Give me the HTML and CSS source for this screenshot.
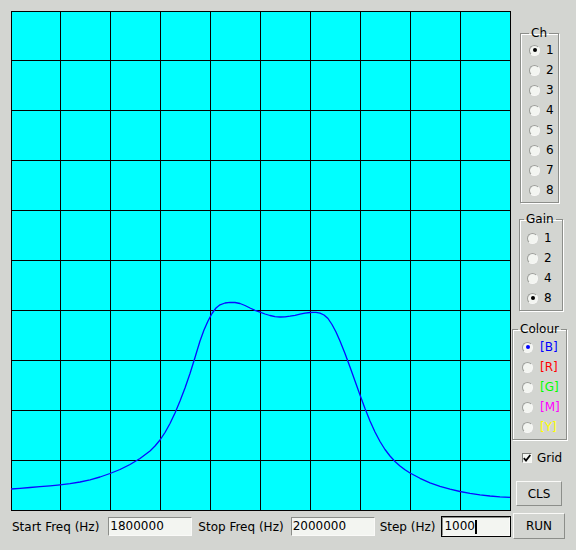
FILE: index.html
```html
<!DOCTYPE html>
<html lang="en">
<head>
  <meta charset="UTF-8">
  <title>Sweep</title>
  <link rel="stylesheet" href="styles.css">
</head>
<body>
  <div class="app">
    <div class="plot">
      <svg class="scope" width="500" height="500" viewBox="11 11 500 500">
        <rect x="11" y="11" width="500" height="500" fill="#00ffff"/>
        <g class="grid">
          <line x1="11.5" y1="11" x2="11.5" y2="511"/>
          <line x1="60.5" y1="11" x2="60.5" y2="511"/>
          <line x1="110.5" y1="11" x2="110.5" y2="511"/>
          <line x1="160.5" y1="11" x2="160.5" y2="511"/>
          <line x1="210.5" y1="11" x2="210.5" y2="511"/>
          <line x1="260.5" y1="11" x2="260.5" y2="511"/>
          <line x1="310.5" y1="11" x2="310.5" y2="511"/>
          <line x1="360.5" y1="11" x2="360.5" y2="511"/>
          <line x1="410.5" y1="11" x2="410.5" y2="511"/>
          <line x1="460.5" y1="11" x2="460.5" y2="511"/>
          <line x1="510.5" y1="11" x2="510.5" y2="511"/>
          <line x1="11" y1="11.5" x2="511" y2="11.5"/>
          <line x1="11" y1="60.5" x2="511" y2="60.5"/>
          <line x1="11" y1="110.5" x2="511" y2="110.5"/>
          <line x1="11" y1="160.5" x2="511" y2="160.5"/>
          <line x1="11" y1="210.5" x2="511" y2="210.5"/>
          <line x1="11" y1="260.5" x2="511" y2="260.5"/>
          <line x1="11" y1="310.5" x2="511" y2="310.5"/>
          <line x1="11" y1="360.5" x2="511" y2="360.5"/>
          <line x1="11" y1="410.5" x2="511" y2="410.5"/>
          <line x1="11" y1="460.5" x2="511" y2="460.5"/>
          <line x1="11" y1="510.5" x2="511" y2="510.5"/>
        </g>
        <polyline class="trace" points="11,489 20,488.3 30,487.5 40,486.7 50,485.8 60,484.8 70,483.6 80,482 90,479.8 100,477 110,473.5 120,469.5 130,464.5 140,458.5 150,451 155,446 160,440 165,432.5 170,423.5 175,413 180,401 185,388 190,373.5 195,357.5 200,341 204,330 208,321 212,313.5 216,308 220,304.8 225,303 230,302.3 235,302.5 240,303.5 245,305.5 250,308 255,310.3 260,312.2 265,314 270,315.5 275,316.6 280,317 285,316.8 290,316.2 295,315.3 300,314.2 305,313.2 310,312.5 313,312.3 316,312.3 320,313.2 324,315 328,318.5 332,324.5 336,332 340,341 345,353.5 350,367 355,381 360,395 365,408.5 370,421 375,432 380,441.5 385,449.5 390,456 395,461.5 400,466 405,469.8 410,473 420,478.3 430,482.8 440,486.3 450,489.2 460,491.5 470,493.3 480,494.8 490,496 500,496.8 510,497.3"/>
      </svg>
    </div>

    <div class="side">
      <fieldset class="group group-ch">
        <legend>Ch</legend>
        <div class="opt"><span class="radio on"></span>1</div>
        <div class="opt"><span class="radio"></span>2</div>
        <div class="opt"><span class="radio"></span>3</div>
        <div class="opt"><span class="radio"></span>4</div>
        <div class="opt"><span class="radio"></span>5</div>
        <div class="opt"><span class="radio"></span>6</div>
        <div class="opt"><span class="radio"></span>7</div>
        <div class="opt"><span class="radio"></span>8</div>
      </fieldset>

      <fieldset class="group group-gain">
        <legend>Gain</legend>
        <div class="opt"><span class="radio"></span>1</div>
        <div class="opt"><span class="radio"></span>2</div>
        <div class="opt"><span class="radio"></span>4</div>
        <div class="opt"><span class="radio on"></span>8</div>
      </fieldset>

      <fieldset class="group group-colour">
        <legend>Colour</legend>
        <div class="opt c-blue"><span class="radio on"></span>[B]</div>
        <div class="opt c-red"><span class="radio"></span>[R]</div>
        <div class="opt c-green"><span class="radio"></span>[G]</div>
        <div class="opt c-magenta"><span class="radio"></span>[M]</div>
        <div class="opt c-yellow"><span class="radio"></span>[Y]</div>
      </fieldset>

      <div class="check">
        <span class="box">
          <svg width="8" height="8" viewBox="0 0 8 8"><path d="M0.8 4.2 L3 6.6 L7.3 1" fill="none" stroke="#000" stroke-width="1.8"/></svg>
        </span>
        Grid
      </div>

      <button class="btn btn-cls">CLS</button>
    </div>

    <div class="freqbar">
      <span class="lbl">Start Freq (Hz)</span>
      <div class="field f-start">1800000</div>
      <span class="lbl">Stop Freq (Hz)</span>
      <div class="field f-stop">2000000</div>
      <span class="lbl">Step (Hz)</span>
      <div class="field f-step focus">1000<span class="caret"></span></div>
    </div>

    <div class="runcell">
      <button class="btn btn-run">RUN</button>
    </div>
  </div>
</body>
</html>
```

FILE: styles.css
```css
body {
  margin: 0;
  background: #d3d5d1;
  font-family: "DejaVu Sans", Verdana, sans-serif;
  font-size: 12px;
  color: #000;
}

.app {
  display: grid;
  grid-template-columns: 511px 65px;
  grid-template-rows: 511px 39px;
  width: 576px;
  height: 550px;
  overflow: hidden;
}

.plot {
  padding: 11px 0 0 11px;
}

.scope {
  display: block;
}

.grid line {
  stroke: #000;
  stroke-width: 1;
  shape-rendering: crispEdges;
}

.trace {
  fill: none;
  stroke: #0a0aff;
  stroke-width: 1.3;
  stroke-linejoin: round;
}

/* right hand controls */
.side {
  display: flex;
  flex-direction: column;
  align-items: flex-start;
  padding-top: 26px;
}

.group {
  margin: 0;
  padding: 0 0 2px;
  border: 1px solid #8c8e8a;
  box-shadow: 1px 1px 0 #fff, inset 1px 1px 0 #fff;
  box-sizing: border-box;
}

.group legend {
  padding: 0 2px;
  line-height: 14px;
}

.group-ch {
  width: 39px;
  margin-left: 9px;
}

.group-ch legend {
  margin-left: 8px;
}

.group-ch .opt {
  padding-left: 8px;
  gap: 6px;
}

.group-gain {
  width: 44px;
  margin-left: 8px;
  margin-top: 9px;
  padding-top: 2px;
}

.group-gain legend {
  margin-left: 4px;
}

.group-gain .opt {
  padding-left: 7px;
  gap: 6px;
}

.group-colour {
  width: 55px;
  margin-left: 1px;
  margin-top: 11px;
  padding-top: 1px;
}

.group-colour legend {
  margin-left: 5px;
}

.group-colour .opt {
  padding-left: 9px;
  gap: 7px;
}

.opt {
  display: flex;
  align-items: center;
  height: 20px;
}

.radio {
  width: 11px;
  height: 11px;
  box-sizing: border-box;
  border-radius: 50%;
  border: 1px solid;
  border-color: #9c9e9a #f8f8f6 #f8f8f6 #9c9e9a;
  background: #f3f5f1;
  display: flex;
  align-items: center;
  justify-content: center;
  flex: none;
}

.radio.on::after {
  content: "";
  width: 4px;
  height: 4px;
  border-radius: 50%;
  background: #000;
}

.c-blue { color: #0000ff; }
.c-red { color: #ff0000; }
.c-green { color: #00ff00; }
.c-magenta { color: #ff00ff; }
.c-yellow { color: #ffff00; }

.c-blue .radio.on::after {
  background: #0000ff;
}

.check {
  display: flex;
  align-items: center;
  gap: 5px;
  height: 20px;
  margin-top: 8px;
  margin-left: 11px;
}

.check .box {
  width: 10px;
  height: 10px;
  box-sizing: border-box;
  border: 1px solid;
  border-color: #7c7e7a #f8f8f6 #f8f8f6 #7c7e7a;
  background: #f3f5f1;
  display: flex;
  align-items: center;
  justify-content: center;
}

.check .box svg {
  display: block;
}

.btn {
  font-family: inherit;
  font-size: 12px;
  color: #000;
  background: #d3d5d1;
  border: 1px solid;
  border-color: #fafaf8 #8c8e8a #8c8e8a #fafaf8;
  padding: 0;
  margin: 0;
}

.btn-cls {
  width: 46px;
  height: 25px;
  margin-top: 13px;
  margin-left: 5px;
}

.runcell {
  padding: 2px 0 0 2px;
}

.btn-run {
  width: 52px;
  height: 26px;
}

/* frequency row */
.freqbar {
  display: flex;
  align-items: center;
  height: 19px;
  padding: 6px 0 0 12px;
}

.lbl {
  white-space: nowrap;
}

.field {
  height: 19px;
  box-sizing: border-box;
  background: #f3f5f1;
  border: 1px solid;
  border-color: #8c8e8a #fafaf8 #fafaf8 #8c8e8a;
  padding: 0 1px;
  line-height: 17px;
  white-space: nowrap;
  display: flex;
  align-items: center;
  flex: none;
}

.f-start {
  width: 84px;
  margin: 0 6px 0 9px;
}

.f-stop {
  width: 84px;
  margin: 0 5px 0 7px;
}

.f-step {
  width: 68px;
  margin-left: 7px;
}

.field.focus {
  outline: 1px solid #000;
}

.caret {
  display: inline-block;
  width: 2px;
  height: 14px;
  background: #000;
}
```
